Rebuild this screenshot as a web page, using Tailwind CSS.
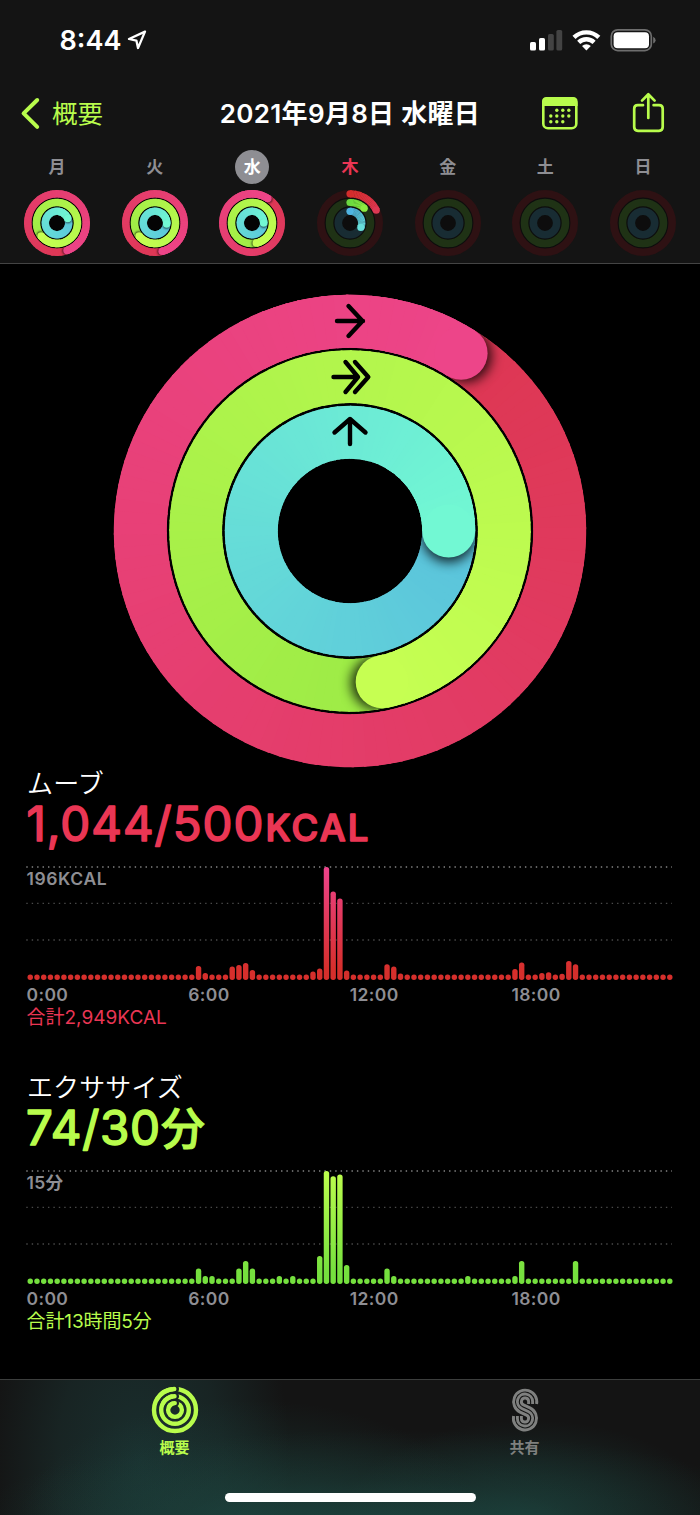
<!DOCTYPE html>
<html lang="ja">
<head>
  <meta charset="UTF-8" />
  <meta name="viewport" content="width=device-width, initial-scale=1.0"/>
  <title>アクティビティ</title>
  <script src="https://cdn.jsdelivr.net/npm/@tailwindcss/browser@4"></script>
</head>
<body class="bg-black font-['Inter','Noto_Sans_CJK_JP',sans-serif] text-white">
<div class="w-[700px] h-[1515px] flex flex-col overflow-hidden">

  <!-- Header -->
  <header class="h-[264px] shrink-0 bg-[#141414] border-b border-[#444]">

    <!-- Status bar -->
    <div class="h-20 flex items-center justify-between pl-[59.5px] pr-11">
      <div class="flex items-center gap-[6px]">
        <span class="text-[27px] leading-none font-semibold tracking-[0px]">8:44</span>
        <svg width="22" height="22" viewBox="0 0 22 22" fill="none" stroke="#fff" stroke-width="2.3" stroke-linejoin="round"><path d="M18 2.6 L2 10 L9.4 11.6 L11 19 Z"/></svg>
      </div>
      <svg width="126" height="24" viewBox="530 28 126 24">
        <rect x="530" y="42" width="6" height="8.6" rx="1.6" fill="#fff"/>
        <rect x="539" y="38" width="6" height="12.6" rx="1.6" fill="#fff"/>
        <rect x="548" y="34" width="5.8" height="16.6" rx="1.6" fill="#434343"/>
        <rect x="556.4" y="30" width="5.8" height="20.6" rx="1.6" fill="#434343"/>
        <g fill="none" stroke="#fff" stroke-width="4.4">
          <path d="M574 37.400 A17.8 17.8 0 0 1 598.8 37.400"/>
          <path d="M578.7 42.400 A11 11 0 0 1 594.1 42.400"/>
        </g>
        <path d="M586.4 50.6 L582 46 A6.6 6.6 0 0 1 590.8 46 Z" fill="#fff"/>
        <rect x="611.3" y="29.8" width="40" height="20.8" rx="6.4" fill="none" stroke="#6e6e6e" stroke-width="1.7"/>
        <rect x="613.6" y="32.2" width="35.4" height="16" rx="4" fill="#fff"/>
        <path d="M653.2 36.8 Q655.6 38 655.6 40.2 Q655.6 42.4 653.2 43.6 Z" fill="#6e6e6e"/>
      </svg>
    </div>

    <!-- Navigation -->
    <div class="h-[68px] grid grid-cols-[219px_262px_1fr] items-center">
      <div class="flex items-center pl-[20px] text-[#b8fc4c]">
        <svg class="-mt-[2px]" width="22" height="34" viewBox="0 0 22 34" fill="none" stroke="currentColor" stroke-width="4" stroke-linecap="round" stroke-linejoin="round"><path d="M17.2 4 L3.6 17.4 L17.2 30.8"/></svg>
        <span class="ml-[10px] text-[25.5px] leading-[34px]">概要</span>
      </div>
      <h1 class="flex justify-center whitespace-nowrap text-[26px] leading-[34px] font-semibold tracking-[0.3px]">2021年9月8日 水曜日</h1>
      <div class="flex items-center justify-between pl-[60px] pr-[35px] -mt-[2px]">
        <svg width="38" height="36" viewBox="541 95 38 36" fill="#b8fc4c">
          <rect x="543.3" y="98.3" width="33" height="30" rx="4.6" fill="none" stroke="#b8fc4c" stroke-width="2.6"/>
          <path d="M542 106 V101.600 Q542 97 546.600 97 H573 Q577.600 97 577.600 101.600 V106 Z"/>
          <g id="calendarDots"></g>
        </svg>
        <svg width="34" height="42" viewBox="631 92 34 42" fill="none" stroke="#b8fc4c" stroke-width="2.7" stroke-linecap="round" stroke-linejoin="round">
          <path d="M643 105.200 H637.800 Q634.200 105.200 634.200 108.800 V127 Q634.200 130.800 638 130.800 H659 Q662.700 130.800 662.700 127 V108.800 Q662.700 105.200 659 105.200 H653.600"/>
          <path d="M648.300 118 V94.600 M642 100.600 L648.300 94.300 L654.600 100.600"/>
        </svg>
      </div>
    </div>

    <!-- Week -->
    <div id="week" class="grid grid-cols-7 px-[8.3px] pt-[2px]"></div>
  </header>

  <!-- Today's rings -->
  <main class="grow px-[26px]">
    <div class="flex justify-center pt-[27px]">
      <svg id="rings" width="480" height="480" viewBox="-240 -240 480 480"></svg>
    </div>

    <!-- Move -->
    <section class="h-[304px] -mt-[5px]">
      <h2 class="h-[33px] pl-px text-[26px] leading-[36px] tracking-[0.2px] font-[350]">ムーブ</h2>
      <svg class="block -mb-[10px] overflow-visible" width="400" height="60" viewBox="26 800 400 60" fill="#ea3654" stroke="#ea3654" stroke-width="1.600" stroke-linejoin="round">
        <text x="26.500" y="842" font-size="47.500" font-weight="400" textLength="237" lengthAdjust="spacing">1,044/500</text>
        <text x="265.500" y="842" font-size="36.500" font-weight="450" textLength="103" lengthAdjust="spacing">KCAL</text>
      </svg>
      <div class="relative h-[135px] pt-[16px]">
        <svg id="moveChart" class="block" width="648" height="116" viewBox="26 865 648 116"></svg>
        <p class="absolute left-[0.5px] top-[19px] text-[17.5px] leading-[22px] font-semibold tracking-[0.6px] text-[#8e8e93]">196KCAL</p>
      </div>
      <div class="grid grid-cols-4 w-[647px] pl-[0.5px] text-[17.5px] leading-[22px] font-semibold tracking-[0.4px] text-[#8e8e93]">
        <span>0:00</span><span>6:00</span><span>12:00</span><span>18:00</span>
      </div>
      <p class="pt-px pl-[0.5px] text-[19px] leading-[22px] text-[#ea3654]">合計2,949KCAL</p>
    </section>

    <!-- Exercise -->
    <section>
      <h2 class="h-[33px] pl-px text-[26px] leading-[36px] tracking-[0.1px] font-[350]">エクササイズ</h2>
      <svg class="block -mb-[10px] overflow-visible" width="400" height="60" viewBox="26 800 400 60" fill="#b8fc4c" stroke="#b8fc4c" stroke-width="1.600" stroke-linejoin="round">
        <text x="26" y="842" font-size="47.500" font-weight="400" textLength="134" lengthAdjust="spacing">74/30</text>
        <text x="161" y="842" font-size="44" font-weight="500" stroke-width="1">分</text>
      </svg>
      <div class="relative h-[135px] pt-[16px]">
        <svg id="exerciseChart" class="block" width="648" height="116" viewBox="26 865 648 116"></svg>
        <p class="absolute left-[0.5px] top-[19px] text-[17.5px] leading-[22px] font-semibold tracking-[0.3px] text-[#8e8e93]">15分</p>
      </div>
      <div class="grid grid-cols-4 w-[647px] pl-[0.5px] text-[17.5px] leading-[22px] font-semibold tracking-[0.4px] text-[#8e8e93]">
        <span>0:00</span><span>6:00</span><span>12:00</span><span>18:00</span>
      </div>
      <p class="pt-px pl-[0.5px] text-[19px] leading-[22px] tracking-[-0.1px] text-[#b8fc4c]">合計13時間5分</p>
    </section>
  </main>

  <!-- Tab bar -->
  <footer class="relative h-[136px] shrink-0 border-t border-[#3c3e3d] bg-[#141414] bg-[radial-gradient(ellipse_420px_100px_at_380px_150px,#1f524baa,#1d453f55_50%,transparent),radial-gradient(ellipse_230px_120px_at_250px_140px,#1d484299,transparent),radial-gradient(ellipse_190px_100px_at_530px_140px,#1d4a4499,transparent),radial-gradient(ellipse_150px_240px_at_140px_80px,#1b3534cc,#1a2c2baa_55%,transparent)]">
    <nav class="grid grid-cols-2 text-[15px] leading-[20px] font-bold text-center">
      <a class="flex flex-col items-center pr-px text-[#b8fc4c]">
        <svg id="tabRings" class="mt-[5px]" width="50" height="50" viewBox="-25 -25 50 50" fill="none" stroke-linecap="round"></svg>
        <span class="mt-[3px]">概要</span>
      </a>
      <a class="flex flex-col items-center pr-px text-[#7f807f]">
        <svg class="mt-[5px]" width="50" height="50" viewBox="-25 -25 50 50" fill="none" stroke="currentColor" stroke-width="2.900">
          <path d="M11.600 -6 A11.600 11.600 0 1 0 -4.940 2.100 L1.530 5.140 A3.600 3.600 0 1 1 -3.600 8.400 V6"/>
          <path d="M7.600 -6 V-8.400 A7.600 7.600 0 1 0 -3.240 -1.520 L3.240 1.520 A7.600 7.600 0 1 1 -7.600 8.400 V6"/>
          <path d="M3.600 -6 V-8.400 A3.600 3.600 0 1 0 -1.530 -5.140 L4.940 -2.100 A11.600 11.600 0 1 1 -11.400 6"/>
        </svg>
        <span class="mt-[3px]">共有</span>
      </a>
    </nav>
    <div class="absolute left-[225px] top-[113px] w-[251px] h-[9px] rounded-full bg-white"></div>
  </footer>
</div>

<script>
  const FULL = {
    move: ['#dd3753', '#ed4589'],
    exercise: ['#9deb46', '#c6ff52'],
    stand: ['#5ac2dc', '#72f8d3']
  };
  const START = {
    move: ['#d42d2c', '#de3853'],
    exercise: ['#6bdb40', '#8ceb41'],
    stand: ['#4fb4e2', '#68e0da']
  };
  const TRACK = { move: '#2e1113', exercise: '#1f3215', stand: '#182c33' };
  let clipId = 0;

  function mix(a, b, t) {
    const ch = [1, 3, 5].map(i => {
      const x = parseInt(a.slice(i, i + 2), 16);
      const y = parseInt(b.slice(i, i + 2), 16);
      return Math.round(x + (y - x) * t);
    });
    return `rgb(${ch.join(',')})`;
  }

  // degrees run clockwise from 12 o'clock
  function point(r, deg) {
    const a = deg * Math.PI / 180;
    return [r * Math.sin(a), -r * Math.cos(a)];
  }

  function arc(r, from, to, color, width, cap = 'butt') {
    const [x1, y1] = point(r, from);
    const [x2, y2] = point(r, to);
    const large = to - from > 180 ? 1 : 0;
    return `<path d="M${x1} ${y1} A${r} ${r} 0 ${large} 1 ${x2} ${y2}" fill="none" stroke="${color}" stroke-width="${width}" stroke-linecap="${cap}"/>`;
  }

  function sweep(r, width, from, to, start, end, colors) {
    let out = '';
    for (let d = from; d < to; d += 3) {
      out += arc(r, d, Math.min(d + 3.6, to), mix(colors[0], colors[1], (d - start) / (end - start)), width);
    }
    return out;
  }

  // A closed ring whose head lies on top of its own tail
  function fullRing(r, width, head, colors) {
    const end = head + 360;
    const [hx, hy] = point(r, head);
    const [sx, sy] = point(r, head + width * 0.09 * 57.3 / r);
    const id = 'clip' + clipId++;
    const o = r + width / 2, i = r - width / 2;
    return `<clipPath id="${id}"><path clip-rule="evenodd" d="M${-o} 0 a${o} ${o} 0 1 0 ${2 * o} 0 a${o} ${o} 0 1 0 ${-2 * o} 0 M${-i} 0 a${i} ${i} 0 1 0 ${2 * i} 0 a${i} ${i} 0 1 0 ${-2 * i} 0"/></clipPath>`
      + `<circle r="${r}" fill="none" stroke="${mix(colors[0], colors[1], 0.5)}" stroke-width="${width - 0.6}"/>`
      + sweep(r, width, head, end, head, end, colors)
      + `<g clip-path="url(#${id})"><circle cx="${sx}" cy="${sy}" r="${width / 2}" fill="#000" fill-opacity="0.8" style="filter: blur(${width * 0.11}px)"/></g>`
      + sweep(r, width, end - 60, end, head, end, colors)
      + `<circle cx="${hx}" cy="${hy}" r="${width / 2}" fill="${colors[1]}"/>`;
  }

  function partRing(r, width, head, colors) {
    const [x1, y1] = point(r, 0);
    const [x2, y2] = point(r, head);
    return `<circle cx="${x1}" cy="${y1}" r="${width / 2}" fill="${colors[0]}"/>`
      + sweep(r, width, 0, head, 0, head, colors)
      + `<circle cx="${x2}" cy="${y2}" r="${width / 2}" fill="${colors[1]}"/>`;
  }

  // Large rings
  document.getElementById('rings').innerHTML =
    fullRing(209.7, 53, 32, FULL.move)
    + fullRing(154.3, 52.8, 168, FULL.exercise)
    + fullRing(98.7, 53, 90, FULL.stand)
    + `<g fill="none" stroke="#000" stroke-width="4.4" stroke-linecap="round" stroke-linejoin="round">
        <path d="M-13 -210 H13 M-1.500 -225 L12.500 -210 L-1.500 -195"/>
        <path d="M-16.500 -154 H7 M-4.500 -169 L8 -154 L-4.500 -139 M5 -169 L18.300 -154 L5 -139"/>
        <path d="M0 -87 V-112 M-15.500 -98.500 L0 -112 L15.500 -98.500"/>
      </g>`;

  // Week strip
  const week = [
    { day: '月', heads: [160, 231, 67], full: true },
    { day: '火', heads: [166, 231, 95], full: true },
    { day: '水', heads: [33, 168, 90], full: true, selected: true },
    { day: '木', heads: [64, 44, 112], today: true },
    { day: '金' },
    { day: '土' },
    { day: '日' }
  ];
  const small = { move: 29.2, exercise: 20.5, stand: 11.7 };

  week.forEach(w => {
    const rings = Object.keys(small).map((key, i) => {
      const r = small[key];
      if (w.full) return fullRing(r, 7.5, w.heads[i], FULL[key]);
      const track = `<circle r="${r}" fill="none" stroke="${TRACK[key]}" stroke-width="7.6"/>`;
      return track + (w.heads ? partRing(r, 7.2, w.heads[i], START[key]) : '');
    }).join('');
    const tone = w.selected ? 'bg-[#8e8e93] text-white' : w.today ? 'text-[#ea3654]' : 'text-[#8e8e93]';
    const div = document.createElement('div');
    div.className = 'flex flex-col items-center gap-[5px]';
    div.innerHTML = `<span class="size-[34px] rounded-full flex items-center justify-center text-[17px] leading-none font-bold ${tone}">${w.day}</span>
      <svg width="68" height="68" viewBox="-34 -34 68 68"><circle r="30" fill="#000" fill-opacity="${w.full ? 0.8 : 0.3}"/>${rings}</svg>`;
    document.getElementById('week').appendChild(div);
  });

  // Charts: 96 quarter-hour bars, listed are only those above the minimum
  function chart(id, bars, bottom, top) {
    let out = `<linearGradient id="${id}Fill" gradientUnits="userSpaceOnUse" x1="0" y1="980" x2="0" y2="867">
      <stop offset="0.1" stop-color="${bottom}"/><stop offset="1" stop-color="${top}"/></linearGradient>`;
    [867, 903.4, 940].forEach((y, i) => {
      out += `<path d="M26.300 ${y} H672" stroke="${i ? '#4a4a4a' : '#858585'}" stroke-width="1.4" stroke-dasharray="1.4 4.02"/>`;
    });
    for (let i = 0; i < 96; i++) {
      const h = bars[i] || 5.4;
      out += `<rect x="${27.55 + i * 6.732}" y="${979.9 - h}" width="5.4" height="${h}" rx="2.6" fill="url(#${id}Fill)"/>`;
    }
    document.getElementById(id).innerHTML = out;
  }

  chart('moveChart', {
    25: 14, 26: 7, 30: 13.3, 31: 15, 32: 17, 33: 10, 42: 8.3, 43: 11.3, 44: 113, 45: 88.3, 46: 81.5, 47: 9.3,
    53: 15.6, 54: 13.3, 55: 6.4, 72: 11, 73: 17.3, 76: 6.8, 77: 7.6, 79: 6.2, 80: 19, 81: 15.6
  }, '#d62f2c', '#ed438b');
  chart('exerciseChart', {
    25: 15.3, 26: 7.8, 27: 7.8, 31: 15.3, 32: 23, 33: 15.3, 37: 7.8, 39: 7.8, 43: 28, 44: 113, 45: 107.7, 46: 109.5, 47: 19,
    53: 15.3, 54: 7.8, 65: 7.8, 72: 7.8, 73: 23, 81: 23
  }, '#75e03e', '#bdfd4d');

  // Calendar dots
  const dots = [[556.8, 562.8, 568.8], [550.8, 556.8, 562.8, 568.8], [550.8, 556.8, 562.8]];
  document.getElementById('calendarDots').innerHTML = dots.map((row, i) =>
    row.map(x => `<circle cx="${x}" cy="${110.2 + i * 5.8}" r="1.7"/>`).join('')).join('');

  // Tab icon rings, each with a rounded end over its start
  document.getElementById('tabRings').innerHTML = [21, 13.8, 6.9].map(r =>
    `<circle r="${r}" stroke="#b8fc4c" stroke-width="4.4"/>
     <circle cx="0.600" cy="${-r}" r="3.4" fill="#192625"/>`
    + arc(r, -60, -2, '#b8fc4c', 4.4, 'round')).join('');
</script>
</body>
</html>
